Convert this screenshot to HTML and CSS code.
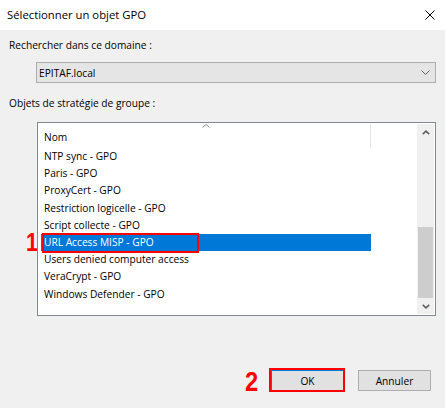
FILE: index.html
```html
<!DOCTYPE html>
<html lang="fr">
<head>
<meta charset="utf-8">
<title>Sélectionner un objet GPO</title>
<link rel="stylesheet" href="styles.css">
</head>
<body>
<div class="dialog">
  <div class="titlebar">
    <span class="title">Sélectionner un objet GPO</span>
    <svg class="close" width="10" height="10" viewBox="0 0 10 10"><path d="M0.5 0.5 L9.5 9.5 M9.5 0.5 L0.5 9.5" stroke="#000" stroke-width="1" fill="none"/></svg>
  </div>
  <div class="main">
    <div class="label label-domain">Rechercher dans ce domaine :</div>
    <div class="combo">
      <span class="combo-text">EPITAF.local</span>
      <svg class="combo-arrow" width="9" height="5" viewBox="0 0 9 5"><path d="M0.5 0.5 L4.5 4.5 L8.5 0.5" stroke="#606060" stroke-width="1" fill="none"/></svg>
    </div>
    <div class="label label-list">Objets de stratégie de groupe :</div>
    <div class="listbox">
      <div class="list-area">
        <div class="list-header">
          <span class="col-name">Nom</span>
          <svg class="sort-caret" width="8" height="4" viewBox="0 0 8 4"><path d="M0.5 3.5 L4 0.5 L7.5 3.5" stroke="#8a8a8a" stroke-width="1" fill="none"/></svg>
        </div>
        <div class="rows">
          <div class="row">NTP sync - GPO</div>
          <div class="row">Paris - GPO</div>
          <div class="row">ProxyCert - GPO</div>
          <div class="row">Restriction logicelle - GPO</div>
          <div class="row">Script collecte - GPO</div>
          <div class="row selected">URL Access MISP - GPO<span class="mark mark-row"></span><span class="num num-1">1</span></div>
          <div class="row">Users denied computer access</div>
          <div class="row">VeraCrypt - GPO</div>
          <div class="row">Windows Defender - GPO</div>
        </div>
      </div>
      <div class="scrollbar">
        <div class="sb-btn">
          <svg width="8" height="5" viewBox="0 0 8 5"><path d="M0.8 4.2 L4 1.2 L7.2 4.2" stroke="#606060" stroke-width="1.6" fill="none"/></svg>
        </div>
        <div class="sb-track">
          <div class="sb-thumb"></div>
        </div>
        <div class="sb-btn">
          <svg width="8" height="5" viewBox="0 0 8 5"><path d="M0.8 0.8 L4 3.8 L7.2 0.8" stroke="#606060" stroke-width="1.6" fill="none"/></svg>
        </div>
      </div>
    </div>
  </div>
  <div class="footer">
    <div class="btn-wrap">
      <button class="btn btn-default">OK</button>
      <span class="mark mark-btn"></span>
      <span class="num num-2">2</span>
    </div>
    <button class="btn">Annuler</button>
  </div>
</div>
</body>
</html>
```
FILE: styles.css
```css
html, body {
  margin: 0;
  padding: 0;
}
body {
  width: 445px;
  height: 408px;
  background: #f0f0f0;
  font-family: "Open Sans", "Liberation Sans", sans-serif;
  font-size: 10.2px;
  color: #000;
  overflow: hidden;
}
.dialog {
  width: 445px;
  height: 408px;
  display: flex;
  flex-direction: column;
}
.titlebar {
  height: 30px;
  flex: 0 0 30px;
  background: #fff;
  display: flex;
  align-items: center;
  justify-content: space-between;
  padding: 0 10px 0 7px;
}
.title {
  font-size: 11.3px;
  line-height: 16px;
  margin-top: -1px;
}
.close {
  display: block;
  margin-top: -1px;
}
.main {
  padding: 0 9px 0 9px;
  display: flex;
  flex-direction: column;
}
.label {
  line-height: 16px;
  height: 16px;
}
.label-domain {
  margin-top: 7px;
}
.combo {
  margin: 9px 0 0 27px;
  width: 400px;
  height: 21px;
  box-sizing: border-box;
  border: 1px solid #adadad;
  background: #e5e5e5;
  display: flex;
  align-items: center;
  justify-content: space-between;
  padding: 0 5px 0 2px;
}
.combo-text {
  line-height: 16px;
}
.combo-arrow {
  display: block;
}
.label-list {
  margin-top: 12px;
}
.listbox {
  margin: 11px 0 0 28px;
  width: 399px;
  height: 194px;
  box-sizing: border-box;
  border: 1px solid #828790;
  background: #fff;
  padding: 1px;
  display: flex;
}
.list-area {
  flex: 1;
  display: flex;
  flex-direction: column;
}
.list-header {
  position: relative;
  width: 332px;
  height: 24px;
  box-sizing: border-box;
  border-right: 1px solid #e5e5e5;
  display: flex;
  align-items: center;
  padding-left: 5px;
}
.col-name {
  line-height: 16px;
  margin-top: 1px;
}
.sort-caret {
  position: absolute;
  left: 163px;
  top: 0;
  display: block;
}
.rows {
  display: flex;
  flex-direction: column;
}
.row {
  position: relative;
  height: 17.2px;
  line-height: 17px;
  width: 330px;
  margin-left: 2px;
  padding-left: 3px;
  box-sizing: border-box;
  white-space: nowrap;
}
.row.selected {
  background: #0078d7;
  color: #fff;
}
.mark {
  position: absolute;
  border: 2px solid #ff0000;
  box-sizing: border-box;
}
.mark-row {
  left: 1px;
  top: -1px;
  width: 157px;
  height: 20px;
}
.num {
  position: absolute;
  font-family: "Liberation Sans", Arial, sans-serif;
  font-weight: bold;
  color: #ff0000;
  line-height: 1;
  transform-origin: left top;
}
.num-1 {
  left: -15px;
  top: -4px;
  font-size: 25px;
  transform: scaleX(0.85);
}
.num-2 {
  left: -26px;
  top: -1px;
  font-size: 27px;
  transform: scaleX(0.88);
}
.scrollbar {
  width: 17px;
  flex: 0 0 17px;
  background: #f0f0f0;
  display: flex;
  flex-direction: column;
}
.sb-btn {
  height: 17px;
  flex: 0 0 17px;
  display: flex;
  align-items: center;
  justify-content: center;
}
.sb-btn svg {
  display: block;
}
.sb-track {
  flex: 1;
  position: relative;
  padding: 0 1px;
  display: flex;
  flex-direction: column;
}
.sb-thumb {
  margin-top: 86px;
  height: 71px;
  background: #cdcdcd;
}
.footer {
  margin-top: auto;
  display: flex;
  justify-content: flex-end;
  gap: 14px;
  padding: 0 14px 17px 0;
}
.btn-wrap {
  position: relative;
  display: flex;
}
.btn {
  width: 73px;
  height: 21px;
  box-sizing: border-box;
  border: 1px solid #adadad;
  background: #e1e1e1;
  font-family: "Open Sans", "Liberation Sans", sans-serif;
  font-size: 10.2px;
  color: #000;
  padding: 0;
  margin: 0;
  line-height: 16px;
}
.btn-default {
  border: 1px solid #0078d7;
}
.mark-btn {
  left: -2px;
  top: -2px;
  width: 76px;
  height: 24px;
}
```
